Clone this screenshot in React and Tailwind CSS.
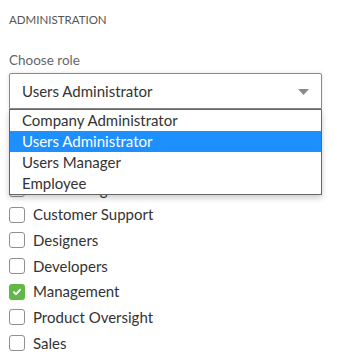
import { useState } from "react";

const roles = ["Company Administrator", "Users Administrator", "Users Manager", "Employee"];

const groups = [
  { name: "Accounting", checked: false },
  { name: "Customer Support", checked: false },
  { name: "Designers", checked: false },
  { name: "Developers", checked: false },
  { name: "Management", checked: true },
  { name: "Product Oversight", checked: false },
  { name: "Sales", checked: false }
];

function Checkbox({ checked }) {
  if (checked) {
    return (
      <span className="flex h-[16px] w-[16px] items-center justify-center rounded-[3px] bg-[#62b846]">
        <svg width="10" height="10" viewBox="0 0 10 10">
          <path d="M2 5.2 L4.1 7.2 L8 2.8" fill="none" stroke="white" strokeWidth="1.9" strokeLinecap="round" strokeLinejoin="round" />
        </svg>
      </span>
    );
  }
  return <span className="h-[16px] w-[16px] rounded-[3px] border border-[#8f8f8f] bg-white" />;
}

export default function App() {
  const [role] = useState("Users Administrator");

  return (
    <div className="relative h-[360px] w-[337px] overflow-hidden bg-white px-[9px] text-[#333]" style={{ fontFamily: '"Source Sans Pro", Lato, sans-serif' }}>
      <div className="pt-[13px] text-[11.5px] uppercase leading-[14px] text-[#555]">Administration</div>

      <div className="mt-[25px] text-[13.5px] leading-[16px] text-[#666]">Choose role</div>

      <div className="relative mt-[5px] w-[313px]">
        <div className="flex h-[36px] items-center justify-between rounded-t-[2px] border border-[#8a8a8a] bg-white pl-[12px] pr-[12px] shadow-[0_0_4px_rgba(0,0,0,0.12)]">
          <span className="text-[15px] text-[#333]">{role}</span>
          <svg width="11" height="6" viewBox="0 0 11 6" className="mt-[1px]">
            <path d="M0 0 H11 L5.5 6 Z" fill="#8a8a8a" />
          </svg>
        </div>

        <ul className="absolute left-0 top-[36px] z-10 w-[313px] border border-[#666] bg-white shadow-[0_3px_6px_rgba(0,0,0,0.2)]">
          {roles.map((r) => (
            <li
              key={r}
              className={`flex h-[21px] items-center pl-[12px] text-[15px] ${
                r === role ? "bg-[#1e8ffe] text-white" : "text-[#333]"
              }`}
            >
              {r}
            </li>
          ))}
        </ul>
      </div>

      <ul className="mt-[67px]">
        {groups.map((g) => (
          <li key={g.name} className="flex h-[25.7px] items-center gap-[8px]">
            <Checkbox checked={g.checked} />
            <span className="text-[15px] text-[#333]">{g.name}</span>
          </li>
        ))}
      </ul>
    </div>
  );
}
